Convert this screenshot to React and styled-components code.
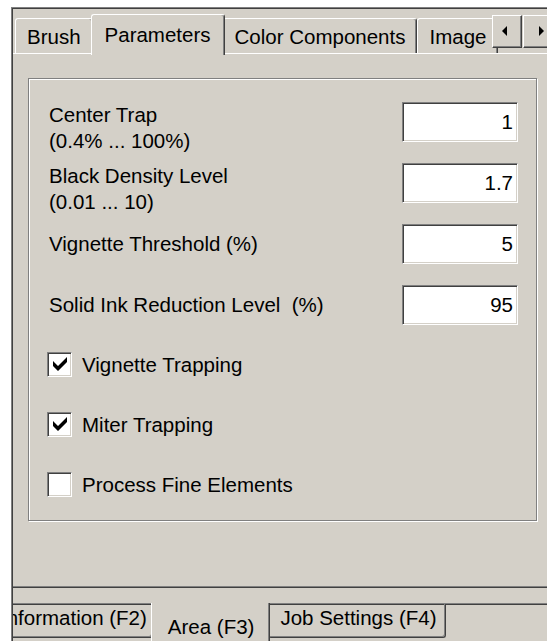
import React from 'react';
import styled, { createGlobalStyle } from 'styled-components';

const GlobalStyle = createGlobalStyle`
  html, body {
    margin: 0;
    padding: 0;
    background: #fff;
  }
  body {
    overflow: hidden;
    font-family: "Liberation Sans", Arial, sans-serif;
    font-size: 20.5px;
    color: #000;
  }
`;

const Screen = styled.div`
  width: 547px;
  height: 641px;
  overflow: hidden;
  box-sizing: border-box;
  padding: 7px 0 0 11px;
  background: #fff;
`;

const Frame = styled.div`
  width: 570px;
  height: 634px;
  box-sizing: border-box;
  border-top: 1px solid #808080;
  border-left: 1px solid #808080;
  background: #d4d0c8;
`;

const Client = styled.div`
  height: 100%;
  box-sizing: border-box;
  border-top: 1px solid #404040;
  border-left: 1px solid #404040;
  overflow: hidden;
  display: flex;
  flex-direction: column;
`;

/* ---- top tab strip ---- */

const TopTabs = styled.div`
  position: relative;
  height: 44px;
  flex: none;
  display: flex;
  align-items: flex-end;
  padding-left: 2px;
  z-index: 1;
`;

const TopTab = styled.div`
  position: relative;
  box-sizing: border-box;
  height: ${p => (p.$active ? 41 : 35)}px;
  margin: ${p => (p.$active ? '0 -2px -2px' : '0')};
  padding: ${p => (p.$active ? '7px 13px 0' : '5px 11px 0')};
  border: 1px solid #fff;
  border-bottom: none;
  border-right-color: #404040;
  border-radius: 3px 3px 0 0;
  box-shadow: inset -1px 0 0 #808080;
  background: ${p => (p.$active ? '#d4d0c8' : 'transparent')};
  z-index: ${p => (p.$active ? 2 : 1)};
  line-height: 26px;
  white-space: nowrap;
`;

const Scroller = styled.div`
  position: absolute;
  left: 479px;
  top: 6px;
  display: flex;
  gap: 1px;
  z-index: 3;
`;

const ScrollButton = styled.div`
  width: 30px;
  height: 33px;
  box-sizing: border-box;
  display: flex;
  align-items: center;
  justify-content: center;
  padding: ${p => (p.$dir === 'left' ? '0 6px 2px 0' : '0 0 2px 6px')};
  background: #d4d0c8;
  border: 1px solid;
  border-color: #fff #404040 #404040 #fff;
  box-shadow: inset -1px -1px 0 #808080;

  &::before {
    content: '';
    width: 0;
    height: 0;
    border-top: 5px solid transparent;
    border-bottom: 5px solid transparent;
    ${p =>
      p.$dir === 'left'
        ? 'border-right: 5px solid #000;'
        : 'border-left: 5px solid #000;'}
  }
`;

/* ---- tab page ---- */

const Panel = styled.div`
  flex: none;
  height: 534px;
  box-sizing: border-box;
  border-top: 1px solid #fff;
  border-bottom: 1px solid #808080;
  box-shadow: 0 1px 0 #404040;
  padding: 24px 0 0 15px;
`;

const GroupBox = styled.div`
  width: 509px;
  height: 443px;
  box-sizing: border-box;
  border: 1px solid #808080;
  box-shadow: inset 1px 1px 0 #fff, 1px 1px 0 #fff;
  padding: 23px 18px 0 20px;
`;

const Fields = styled.div`
  display: grid;
  grid-template-columns: 1fr 116px;
  grid-auto-rows: 40px;
  row-gap: 21px;
`;

const Label = styled.div`
  align-self: ${p => (p.$multi ? 'start' : 'center')};
  line-height: 26px;
  white-space: pre;
`;

const Field = styled.input`
  width: 116px;
  height: 40px;
  box-sizing: border-box;
  margin: 0;
  padding: 0 4px 0 0;
  font: inherit;
  color: #000;
  text-align: right;
  background: #fff;
  border: 1px solid;
  border-color: #808080 #fff #fff #808080;
  box-shadow: inset 1px 1px 0 #404040, inset -1px -1px 0 #d4d0c8;
  outline: none;
`;

const Checks = styled.div`
  display: flex;
  flex-direction: column;
  gap: 35px;
  margin: 27px 0 0 -2px;
`;

const CheckRow = styled.label`
  display: flex;
  align-items: center;
  gap: 10px;
  height: 25px;
  line-height: 26px;
  white-space: nowrap;
`;

const CheckBox = styled.span`
  position: relative;
  flex: none;
  width: 25px;
  height: 25px;
  box-sizing: border-box;
  background: #fff;
  border: 1px solid;
  border-color: #808080 #fff #fff #808080;
  box-shadow: inset 1px 1px 0 #404040, inset -1px -1px 0 #d4d0c8;

  svg {
    position: absolute;
    left: -1px;
    top: -1px;
  }
`;

/* ---- bottom tab strip ---- */

const BottomBody = styled.div`
  flex: none;
  height: 17px;
  box-sizing: border-box;
  border-bottom: 1px solid #808080;
  box-shadow: 0 1px 0 #404040;
`;

const BottomTabs = styled.div`
  flex: 1;
  display: flex;
  align-items: flex-start;
  margin-left: -23px;
`;

const BottomTab = styled.div`
  position: relative;
  box-sizing: border-box;
  height: ${p => (p.$active ? 42 : 34)}px;
  margin: ${p => (p.$active ? '-1px -2px 0' : '0')};
  padding: ${p => p.$pad};
  border-left: 1px solid #fff;
  border-right: 1px solid #404040;
  border-bottom: 1px solid #404040;
  border-radius: 0 0 3px 3px;
  box-shadow: inset -1px -1px 0 #808080;
  background: ${p => (p.$active ? '#d4d0c8' : 'transparent')};
  z-index: ${p => (p.$active ? 2 : 1)};
  line-height: 26px;
  white-space: nowrap;
`;

const fields = [
  { label: ['Center Trap', '(0.4% ... 100%)'], value: '1' },
  { label: ['Black Density Level', '(0.01 ... 10)'], value: '1.7' },
  { label: ['Vignette Threshold (%)'], value: '5' },
  { label: ['Solid Ink Reduction Level  (%)'], value: '95' },
];

const checks = [
  { text: 'Vignette Trapping', on: true },
  { text: 'Miter Trapping', on: true },
  { text: 'Process Fine Elements', on: false },
];

const Tick = () => (
  <svg width="25" height="25" viewBox="0 0 25 25">
    <polygon points="6,9 11,14 20,5 20,10 11,19 6,14" fill="#000" />
  </svg>
);

export default function App() {
  return (
    <Screen>
      <GlobalStyle />
      <Frame>
        <Client>
          <TopTabs>
            <TopTab>Brush</TopTab>
            <TopTab $active>Parameters</TopTab>
            <TopTab>Color Components</TopTab>
            <TopTab>Image</TopTab>
            <Scroller>
              <ScrollButton $dir="left" />
              <ScrollButton $dir="right" />
            </Scroller>
          </TopTabs>

          <Panel>
            <GroupBox>
              <Fields>
                {fields.map(f => (
                  <React.Fragment key={f.label[0]}>
                    <Label $multi={f.label.length > 1}>{f.label.join('\n')}</Label>
                    <Field readOnly defaultValue={f.value} />
                  </React.Fragment>
                ))}
              </Fields>
              <Checks>
                {checks.map(c => (
                  <CheckRow key={c.text}>
                    <CheckBox>{c.on && <Tick />}</CheckBox>
                    {c.text}
                  </CheckRow>
                ))}
              </Checks>
            </GroupBox>
          </Panel>

          <BottomBody />
          <BottomTabs>
            <BottomTab $pad="1px 5px 0 10px">Information (F2)</BottomTab>
            <BottomTab $active $pad="11px 15px 0 16px">Area (F3)</BottomTab>
            <BottomTab $pad="1px 8px 0 11px">Job Settings (F4)</BottomTab>
          </BottomTabs>
        </Client>
      </Frame>
    </Screen>
  );
}
